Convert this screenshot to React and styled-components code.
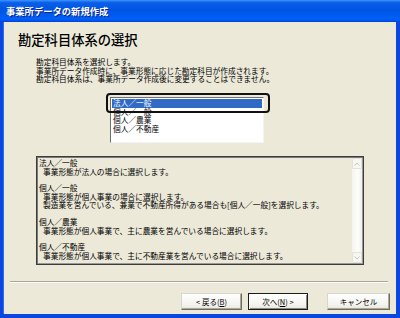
import React from "react";
import styled, { createGlobalStyle } from "styled-components";

const Global = createGlobalStyle`
  html, body { margin: 0; padding: 0; background: #ece9d8; }
  * { box-sizing: border-box; }
  body { font-family: "Noto Sans CJK JP", "Noto Sans", sans-serif; color: #000; }
`;

const Window = styled.div`
  width: 400px;
  height: 318px;
  display: flex;
  flex-direction: column;
  overflow: hidden;
`;

const TitleBar = styled.div`
  height: 22px;
  flex: none;
  display: flex;
  align-items: center;
  padding-left: 6px;
  background: linear-gradient(
    to bottom,
    #3d95ff 0%,
    #0a5fe8 12%,
    #0054e3 45%,
    #0060f6 85%,
    #0058ee 92%,
    #003dd7 100%
  );
`;

const TitleText = styled.span`
  color: #fff;
  font-size: 9.3px;
  font-weight: 700;
  line-height: 12px;
  text-shadow: 1px 1px 0 #0a1e8c;
`;

const Body = styled.div`
  flex: 1;
  display: flex;
  flex-direction: column;
  background: #ece9d8;
  border-left: 3px solid #0b46e0;
  border-right: 4px solid #0b46e0;
  border-bottom: 4px solid #0b46e0;
  box-shadow: inset 1px 0 0 #2a6df0;
`;

const Heading = styled.h1`
  margin: 10px 0 0 15px;
  font-size: 13.3px;
  line-height: 16px;
  font-weight: 500;
`;

const Intro = styled.div`
  margin: 10px 0 0 33px;
  font-size: 7.7px;
  line-height: 8.7px;
`;

const ListArea = styled.div`
  position: relative;
  margin: 13px 0 0 107px;
  width: 154px;
  height: 46px;
`;

const ListBox = styled.div`
  width: 100%;
  height: 100%;
  background: #fff;
  border: 1px solid;
  border-color: #6f6f6f #f4f4f4 #f4f4f4 #6f6f6f;
  padding: 1px;
`;

const ListItem = styled.div`
  height: 8.7px;
  font-size: 7.7px;
  line-height: 8.7px;
  padding-left: 1px;
  background: ${(p) => (p.$selected ? "#316ac5" : "transparent")};
  color: ${(p) => (p.$selected ? "#fff" : "#000")};
  white-space: nowrap;
`;

const FocusRing = styled.div`
  position: absolute;
  left: -4px;
  top: -4px;
  width: 164px;
  height: 20px;
  border: 2px solid #111;
  border-radius: 4px;
  pointer-events: none;
`;

const DescBox = styled.div`
  margin: 13px 0 0 33px;
  width: 328px;
  height: 109px;
  display: flex;
  border: 1px solid #3c3c3c;
  box-shadow: inset 1px 1px 0 #7a7a7a, inset -1px -1px 0 #9a9a9a;
`;

const DescText = styled.div`
  flex: 1;
  padding: 2px 0 0 2px;
  font-size: 7.7px;
  line-height: 8.45px;
  white-space: nowrap;
  overflow: hidden;
`;

const Line = styled.div`
  height: 8.45px;
  padding-left: ${(p) => (p.$indent ? "4px" : "0")};
`;

const ScrollBar = styled.div`
  width: 10px;
  margin: 1px 1px 1px 0;
  display: flex;
  flex-direction: column;
  justify-content: space-between;
  background: linear-gradient(to right, #f4f4f0, #fdfdfb 60%, #f0efe8);
`;

const ScrollBtn = styled.div`
  height: 11px;
  display: flex;
  align-items: center;
  justify-content: center;
  border: 1px solid #e4e2d6;
  border-radius: 1px;
  background: #f7f6f1;
`;

const Separator = styled.div`
  margin: 16px 0 0 7px;
  width: 378px;
  height: 2px;
  border-top: 1px solid #aca899;
  border-bottom: 1px solid #fff;
`;

const ButtonRow = styled.div`
  margin: 10px 6px 0 0;
  display: flex;
  justify-content: flex-end;
  align-items: center;
`;

const Button = styled.div`
  width: ${(p) => p.$w}px;
  height: 17px;
  margin-left: ${(p) => p.$gap}px;
  display: flex;
  align-items: center;
  justify-content: center;
  font-size: 7.5px;
  line-height: 10px;
  background: linear-gradient(to bottom, #fff, #f4f3ee 70%, #e8e6dc);
  border: 1px solid;
  border-color: ${(p) =>
    p.$default ? "#1c1c1c" : "#d8d6cc #6e6c62 #6e6c62 #d8d6cc"};
  box-shadow: ${(p) =>
    p.$default
      ? "inset 1px 1px 0 #fff, inset -1px -1px 0 #8a887e"
      : "inset -1px -1px 0 #aca899"};
  white-space: pre;
`;

const Chevron = ({ up }) => (
  <svg width="6" height="4" viewBox="0 0 6 4">
    <path
      d={up ? "M0.5 3.5 L3 1 L5.5 3.5" : "M0.5 0.5 L3 3 L5.5 0.5"}
      fill="none"
      stroke="#c9c7bc"
      strokeWidth="1"
    />
  </svg>
);

const items = ["法人／一般", "個人／一般", "個人／農業", "個人／不動産"];

const lines = [
  ["法人／一般", false],
  ["事業形態が法人の場合に選択します。", true],
  ["", false],
  ["個人／一般", false],
  ["事業形態が個人事業の場合に選択します。", true],
  ["製造業を営んでいる、兼業で不動産所得がある場合も[個人／一般]を選択します。", true],
  ["", false],
  ["個人／農業", false],
  ["事業形態が個人事業で、主に農業を営んでいる場合に選択します。", true],
  ["", false],
  ["個人／不動産", false],
  ["事業形態が個人事業で、主に不動産業を営んでいる場合に選択します。", true],
];

export default function App() {
  return (
    <>
      <Global />
      <Window>
        <TitleBar>
          <TitleText>事業所データの新規作成</TitleText>
        </TitleBar>
        <Body>
          <Heading>勘定科目体系の選択</Heading>
          <Intro>
            <div>勘定科目体系を選択します。</div>
            <div>事業所データ作成時に、事業形態に応じた勘定科目が作成されます。</div>
            <div>勘定科目体系は、事業所データ作成後に変更することはできません。</div>
          </Intro>
          <ListArea>
            <ListBox>
              {items.map((it, i) => (
                <ListItem key={it} $selected={i === 0}>
                  {it}
                </ListItem>
              ))}
            </ListBox>
            <FocusRing />
          </ListArea>
          <DescBox>
            <DescText>
              {lines.map(([t, ind], i) => (
                <Line key={i} $indent={ind}>
                  {t}
                </Line>
              ))}
            </DescText>
            <ScrollBar>
              <ScrollBtn>
                <Chevron up />
              </ScrollBtn>
              <ScrollBtn>
                <Chevron />
              </ScrollBtn>
            </ScrollBar>
          </DescBox>
          <Separator />
          <ButtonRow>
            <Button $w={61} $gap={0}>
              {"< 戻る("}
              <u>B</u>
              {")"}
            </Button>
            <Button $w={60} $gap={6} $default>
              {"次へ("}
              <u>N</u>
              {") >"}
            </Button>
            <Button $w={63} $gap={19}>
              キャンセル
            </Button>
          </ButtonRow>
        </Body>
      </Window>
    </>
  );
}
